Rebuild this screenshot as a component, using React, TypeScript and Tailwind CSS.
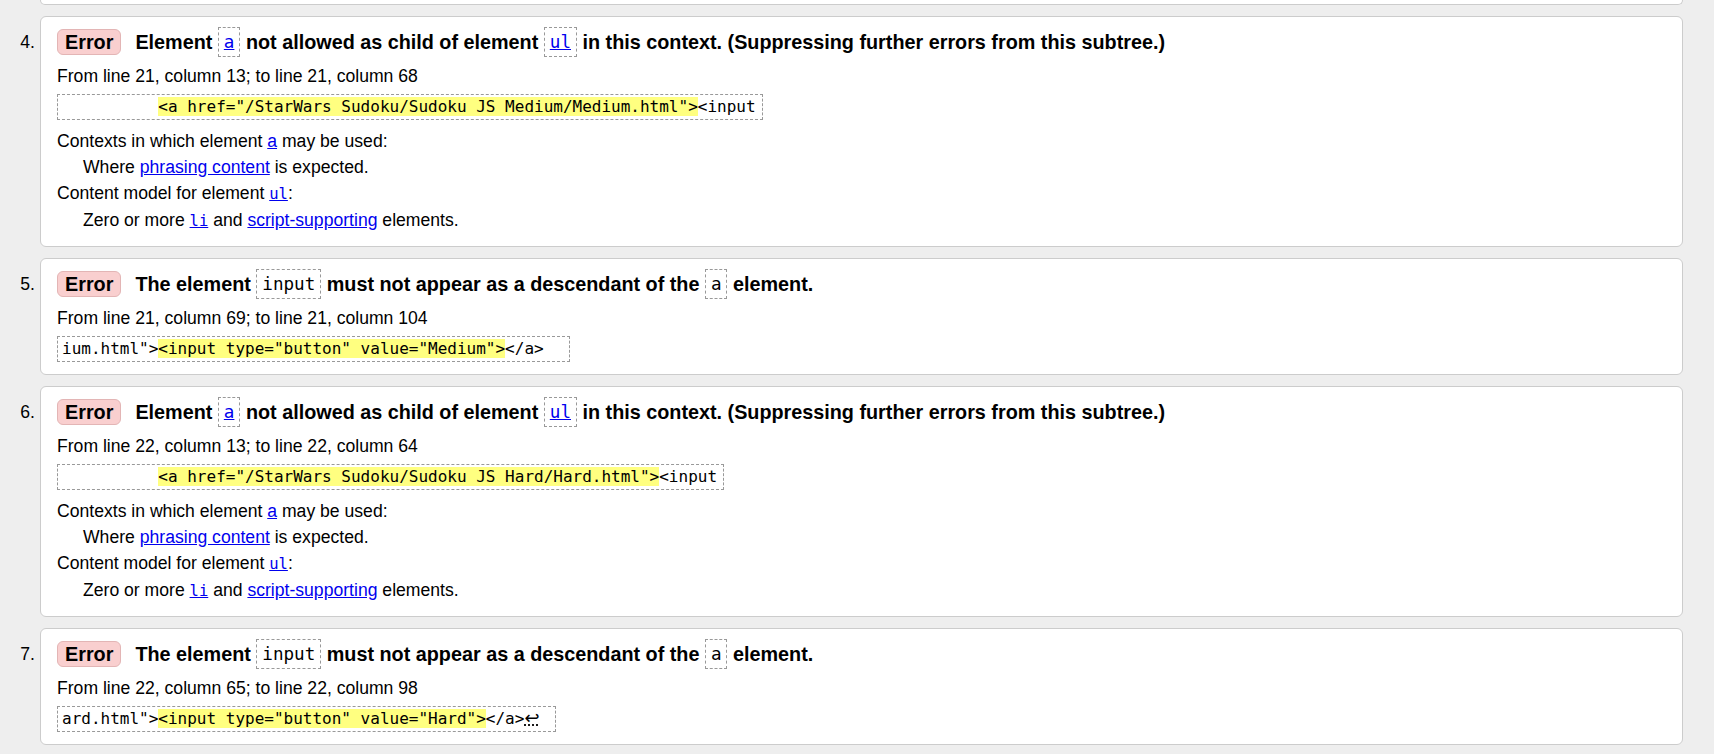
import type { ReactNode } from 'react';

const mono = "font-['DejaVu_Sans_Mono','Liberation_Mono',monospace]";

function Link({ children, code }: { children: ReactNode; code?: boolean }) {
  return (
    <span className={`text-[#0000ee] underline ${code ? `${mono} text-[15.5px]` : ''}`}>{children}</span>
  );
}

// dashed box around element names in the heading
function Tag({ children }: { children: ReactNode }) {
  return (
    <code className={`inline-block align-top h-[30px] px-[5px] border border-dashed border-[#999] ${mono} text-[17.6px] leading-[28px] font-normal`}>
      {children}
    </code>
  );
}

function Mark({ children }: { children: ReactNode }) {
  return <span className="bg-[#ffff80]">{children}</span>;
}

function Item({ n, title, from, code, details }: { n: number; title: ReactNode; from: string; code: ReactNode; details?: ReactNode }) {
  return (
    <div className="flex mt-[11px]">
      <div className="w-[40px] shrink-0 pr-[5px] pt-[11px] text-right text-[17.6px] leading-[30px]">{n}.</div>
      <div className="flex-1 bg-white border border-[#cccccc] rounded-[6px] pt-[10px] pb-[12px] px-[16px]">
        <div className="flex items-start text-[19.8px] font-bold leading-[30px]">
          <span className="shrink-0 mt-[2px] h-[26px] px-[7px] mr-[14px] leading-[24px] rounded-[6px] border border-[#e3b5b5] bg-[#f9cfcf]">
            Error
          </span>
          <p>{title}</p>
        </div>
        <p className="mt-[6px] text-[17.6px] leading-[26px]">{from}</p>
        <div className="mt-[5px]">
          <code className={`inline-block whitespace-pre border border-dashed border-[#999] pl-[4px] pr-[6px] ${mono} text-[16px] leading-[24px]`}>
            {code}
          </code>
        </div>
        {details}
      </div>
    </div>
  );
}

function Contexts() {
  return (
    <div className="mt-[8px] text-[17.6px] leading-[26px]">
      <p>
        Contexts in which element <Link>a</Link> may be used:
      </p>
      <p className="ml-[26px]">
        Where <Link>phrasing content</Link> is expected.
      </p>
      <p>
        Content model for element <Link code>ul</Link>:
      </p>
      <p className="ml-[26px]">
        Zero or more <Link code>li</Link> and <Link>script-supporting</Link> elements.
      </p>
    </div>
  );
}

export default function App() {
  const notAllowed = (
    <>
      Element{' '}
      <Tag>
        <span className="text-[#0000ee] underline">a</span>
      </Tag>{' '}
      not allowed as child of element{' '}
      <Tag>
        <span className="text-[#0000ee] underline">ul</span>
      </Tag>{' '}
      in this context. (Suppressing further errors from this subtree.)
    </>
  );
  const descendant = (
    <>
      The element <Tag>input</Tag> must not appear as a descendant of the <Tag>a</Tag> element.
    </>
  );

  return (
    <div className={`min-h-screen bg-[#eeeeee] pr-[31px] text-black font-['Liberation_Sans',Arial,sans-serif]`}>
      {/* tail of the previous message */}
      <div className="ml-[40px] h-[5px] bg-white border-x border-b border-[#cccccc] rounded-b-[6px]" />

      <Item
        n={4}
        title={notAllowed}
        from="From line 21, column 13; to line 21, column 68"
        code={
          <>
            {'          '}
            <Mark>{'<a href="/StarWars Sudoku/Sudoku JS Medium/Medium.html">'}</Mark>
            {'<input'}
          </>
        }
        details={<Contexts />}
      />
      <Item
        n={5}
        title={descendant}
        from="From line 21, column 69; to line 21, column 104"
        code={
          <>
            {'ium.html">'}
            <Mark>{'<input type="button" value="Medium">'}</Mark>
            {'</a>  '}
          </>
        }
      />
      <Item
        n={6}
        title={notAllowed}
        from="From line 22, column 13; to line 22, column 64"
        code={
          <>
            {'          '}
            <Mark>{'<a href="/StarWars Sudoku/Sudoku JS Hard/Hard.html">'}</Mark>
            {'<input'}
          </>
        }
        details={<Contexts />}
      />
      <Item
        n={7}
        title={descendant}
        from="From line 22, column 65; to line 22, column 98"
        code={
          <>
            {'ard.html">'}
            <Mark>{'<input type="button" value="Hard">'}</Mark>
            {'</a>'}
            <span className="font-['DejaVu_Sans',sans-serif] text-[18px] leading-[20px] underline decoration-dotted">↩</span>
            {' '}
          </>
        }
      />
    </div>
  );
}
